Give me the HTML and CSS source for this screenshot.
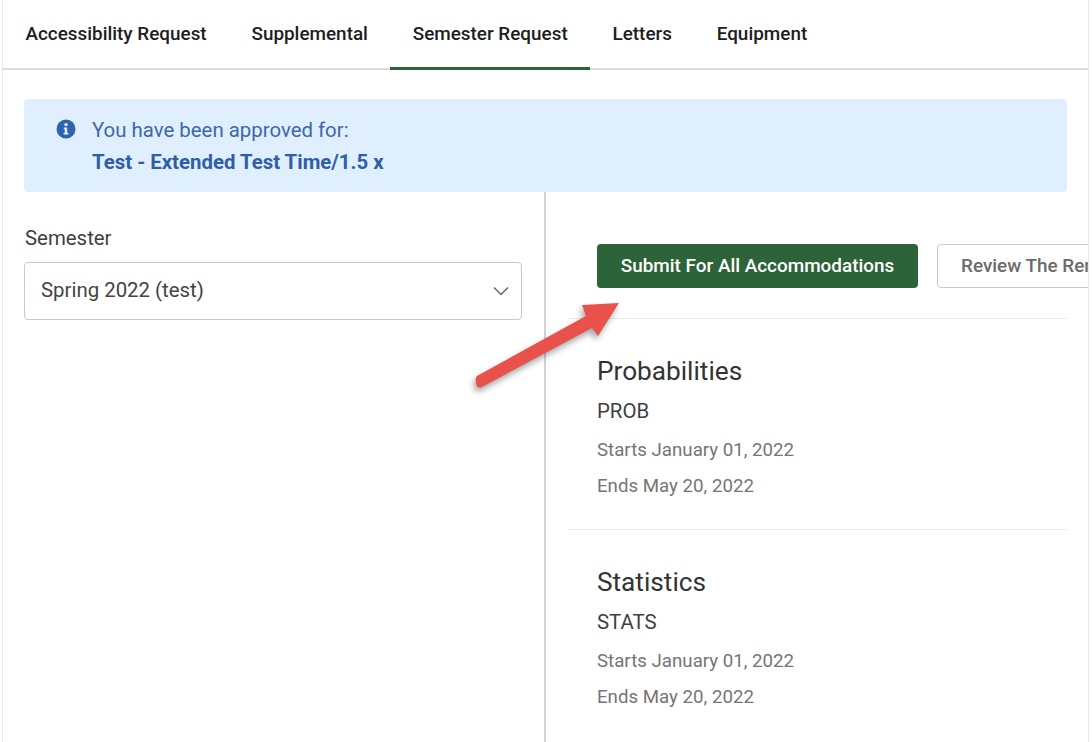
FILE: index.html
```html
<!DOCTYPE html>
<html lang="en">
<head>
    <meta charset="UTF-8">
    <title>Semester Request</title>
    <link rel="stylesheet" href="styles.css">
</head>
<body>
    <div class="page">
        <!-- tabs -->
        <nav class="tabs">
            <a class="tab">Accessibility Request</a>
            <a class="tab">Supplemental</a>
            <a class="tab tab-active">Semester Request</a>
            <a class="tab">Letters</a>
            <a class="tab">Equipment</a>
        </nav>

        <!-- approved banner -->
        <div class="alert">
            <svg class="alert-icon" viewBox="0 0 20 20" width="20" height="20">
                <circle cx="10" cy="10" r="9.5" fill="#2f63ad"/>
                <circle cx="10" cy="5.6" r="1.7" fill="#e0effe"/>
                <path d="M7.8 8.5h3.4v5.2h1.2v1.8H7.6v-1.8h1.2v-3.4h-1z" fill="#e0effe"/>
            </svg>
            <div class="alert-text">
                <p>You have been approved for:</p>
                <p class="alert-strong">Test - Extended Test Time/1.5 x</p>
            </div>
        </div>

        <div class="columns">
            <aside class="side">
                <label class="field-label">Semester</label>
                <div class="select">
                    <span>Spring 2022 (test)</span>
                    <svg viewBox="0 0 16 10" width="16" height="10">
                        <path d="M1 1.5l7 7 7-7" fill="none" stroke="#666" stroke-width="1.5"/>
                    </svg>
                </div>
            </aside>

            <main class="content">
                <div class="actions">
                    <button class="btn btn-primary">Submit For All Accommodations</button>
                    <button class="btn btn-outline">Review The Remaining</button>
                </div>

                <section class="course">
                    <h2>Probabilities</h2>
                    <p class="code">PROB</p>
                    <p class="date">Starts January 01, 2022</p>
                    <p class="date">Ends May 20, 2022</p>
                </section>

                <section class="course">
                    <h2>Statistics</h2>
                    <p class="code">STATS</p>
                    <p class="date">Starts January 01, 2022</p>
                    <p class="date">Ends May 20, 2022</p>
                </section>
            </main>
        </div>

        <!-- annotation arrow drawn over the screenshot -->
        <svg class="arrow" viewBox="0 0 160 100" width="160" height="100">
            <path d="M5 83L114 23L110 12L147 10L126 43L120 35L10 94Q5 96 4 90Q3 85 5 83Z" fill="#e8524a"/>
        </svg>
    </div>
</body>
</html>
```

FILE: styles.css
```css
* {
    margin: 0;
    padding: 0;
    box-sizing: border-box;
}

html, body {
    height: 100%;
    overflow: hidden;
}

body {
    font-family: Roboto, "Liberation Sans", sans-serif;
    background: #fff;
    color: #333;
}

.page {
    position: relative;
    width: 1087px;
    height: 742px;
    overflow: hidden;
    margin-left: 2px;
    border-left: 1px solid #e8e8e8;
    border-right: 1px solid #e8e8e8;
}

/* tabs */
.tabs {
    display: flex;
    height: 70px;
    border-bottom: 2px solid #dcdcdc;
}

.tab {
    display: flex;
    align-items: center;
    height: 70px;
    padding: 0 22.4px 4px;
    font-size: 18.9px;
    font-weight: 500;
    color: #1d1d1d;
}

.tab-active {
    border-bottom: 3px solid #2c6339;
    padding-bottom: 1px;
}

/* banner */
.alert {
    display: flex;
    gap: 16px;
    height: 93px;
    margin: 29px 21px 0 21px;
    padding: 15px 32px;
    background: #e0effe;
    border-radius: 4px;
}

.alert-icon {
    flex: none;
    margin-top: 5px;
}

.alert-text {
    font-size: 20.4px;
    line-height: 32px;
    color: #3d68ab;
}

.alert-strong {
    font-weight: 700;
    color: #2f5ea8;
}

/* columns */
.columns {
    display: flex;
    height: 550px;
}

.side {
    flex: none;
    width: 543px;
    padding: 33px 22px 0 21px;
    border-right: 2px solid #d4d4d4;
}

.field-label {
    display: block;
    padding-left: 1px;
    font-size: 20.4px;
    line-height: 26px;
    color: #3f3f3f;
    margin-bottom: 11px;
}

.select {
    display: flex;
    align-items: center;
    justify-content: space-between;
    height: 58px;
    padding: 0 12px 3px 16px;
    border: 1px solid #c9c9c9;
    border-radius: 4px;
    font-size: 20.4px;
    color: #444;
}

.select svg {
    margin-top: 3px;
}

.content {
    flex: 1;
    min-width: 0;
    padding: 52px 21px 0 22px;
}

.actions {
    display: flex;
    gap: 19px;
    width: 1000px;
    padding: 0 0 30px 29px;
}

.btn {
    height: 44px;
    padding: 0 23px 2px;
    border-radius: 4px;
    font-family: inherit;
    font-size: 18.9px;
    font-weight: 500;
}

.btn-primary {
    width: 321px;
    padding: 0 0 2px;
    background: #2c6339;
    border: none;
    color: #fff;
}

.btn-outline {
    background: #fff;
    border: 1px solid #c9c9c9;
    color: #6b6b6b;
}

.course {
    height: 211px;
    padding: 33px 0 0 29px;
    border-top: 1px solid #e8e8e8;
}

.course h2 {
    font-size: 26.2px;
    font-weight: 400;
    line-height: 38px;
    color: #333;
    margin-bottom: 6px;
}

.code {
    font-size: 20.4px;
    line-height: 30px;
    color: #3f3f3f;
    margin-bottom: 6px;
}

.date {
    font-size: 18.7px;
    line-height: 36px;
    color: #757575;
}

.arrow {
    position: absolute;
    left: 469px;
    top: 293px;
    filter: drop-shadow(-2px 4px 3px rgba(0, 0, 0, 0.35));
}
```
